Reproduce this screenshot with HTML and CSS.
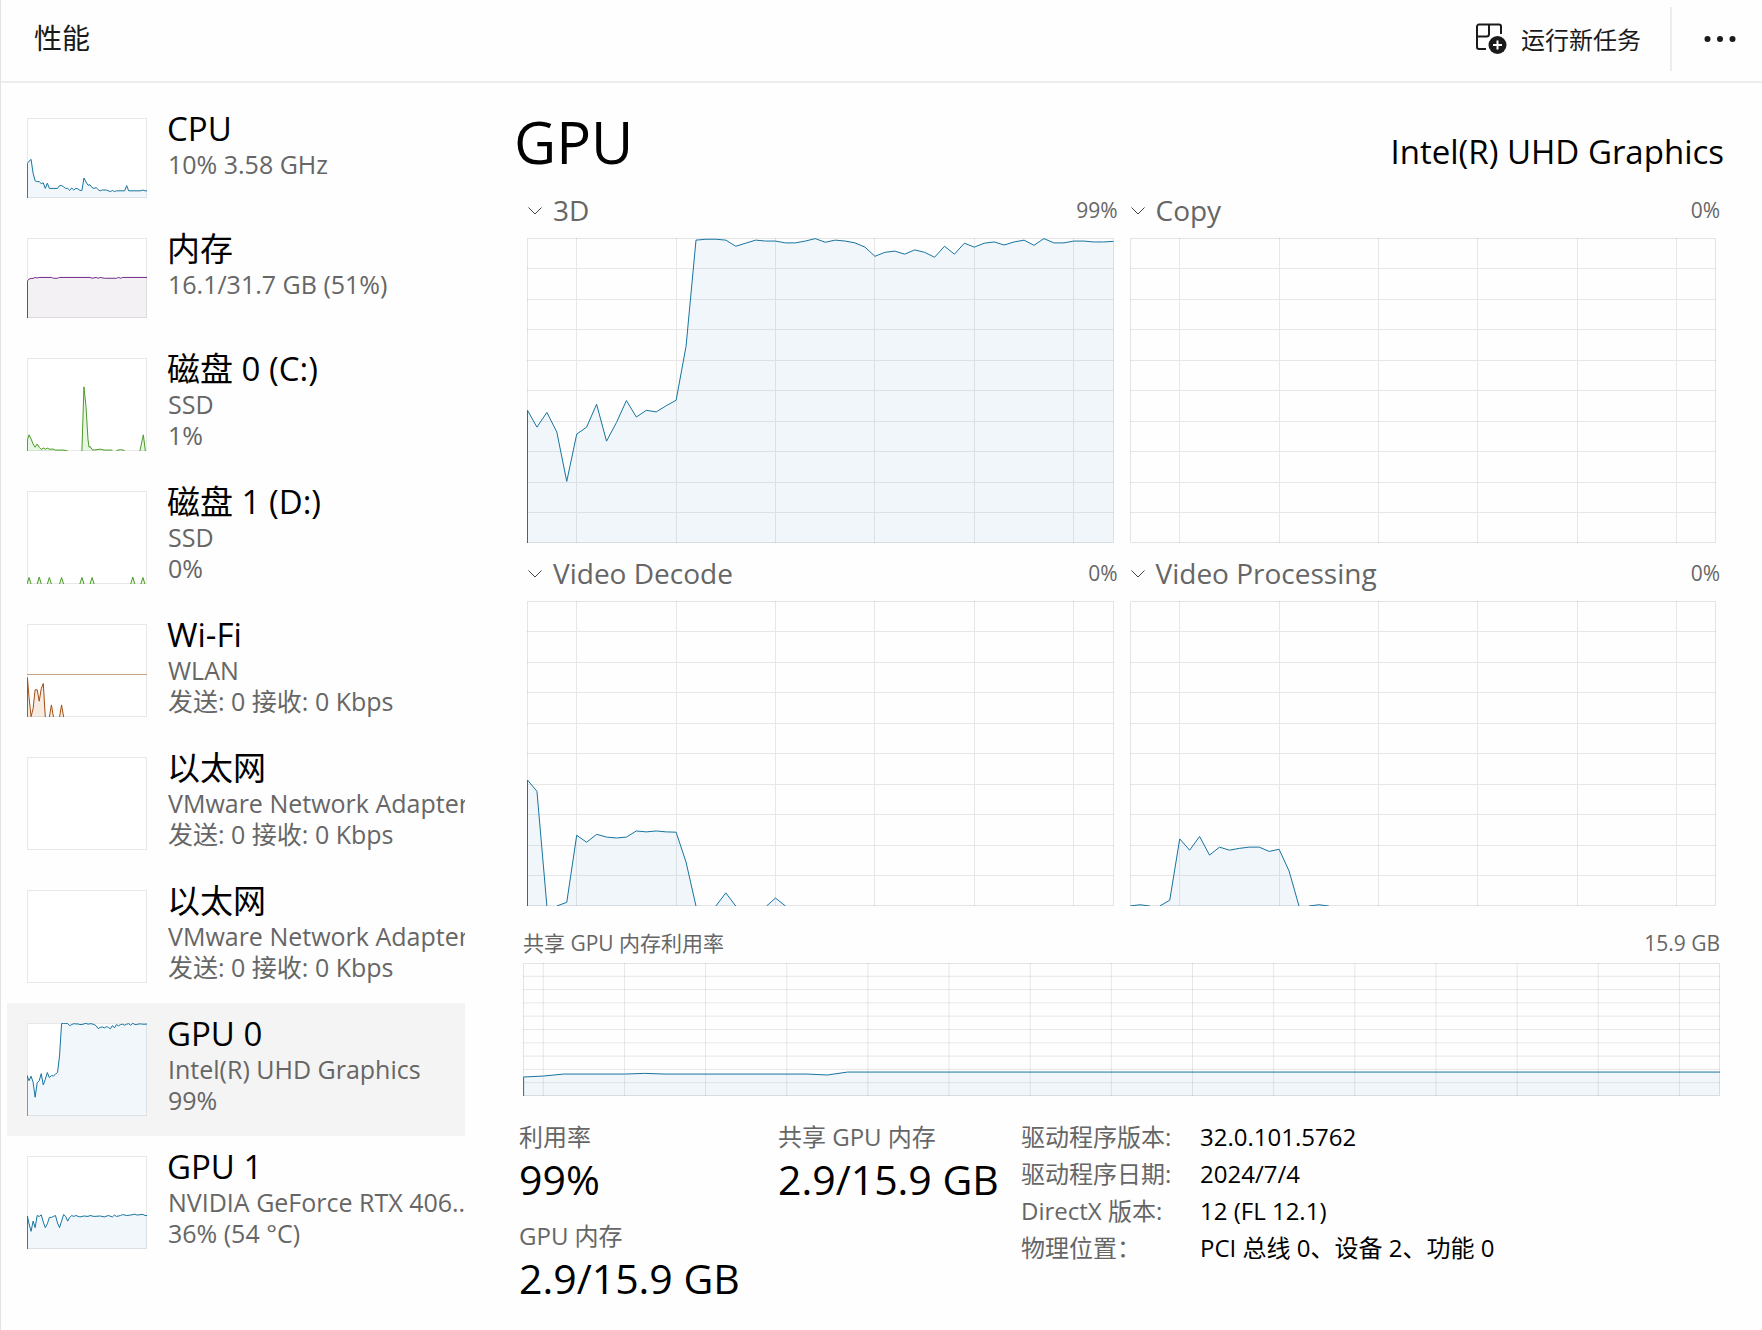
FILE: index.html
```html
<!DOCTYPE html>
<html lang="zh-CN">
<head>
<meta charset="utf-8">
<meta name="viewport" content="width=device-width, initial-scale=1">
<title>性能</title>
<link rel="stylesheet" href="styles.css">
</head>
<body>
<svg class="defs" aria-hidden="true">
  <defs>
    <!-- One unit across is one sample; 100 units down is the full scale -->
    <symbol id="grid-engine" viewBox="0 0 59 100" preserveAspectRatio="none">
      <path class="grid-line" d="M5 0V100M15 0V100M25 0V100M35 0V100M45 0V100M55 0V100M0 10H59M0 20H59M0 30H59M0 40H59M0 50H59M0 60H59M0 70H59M0 80H59M0 90H59"/>
    </symbol>
    <symbol id="grid-memory" viewBox="0 0 59 100" preserveAspectRatio="none">
      <path class="grid-line" d="M1 0V100M5 0V100M9 0V100M13 0V100M17 0V100M21 0V100M25 0V100M29 0V100M33 0V100M37 0V100M41 0V100M45 0V100M49 0V100M53 0V100M57 0V100M0 10H59M0 20H59M0 30H59M0 40H59M0 50H59M0 60H59M0 70H59M0 80H59M0 90H59"/>
    </symbol>
    <symbol id="series-3d" viewBox="0 0 59 100" preserveAspectRatio="none">
      <path class="series" d="M.05 100V56.5L1 62 2 57.2 3 63.6 4 79.8 5 64.3 6 62 7 54.5 8 66.6 9 60.5 10 53.3 11 58.7 12 56.5 13 57 14 55 15 53.2 16 35.5 17 .7 18 .4H19L20 .7 21 2.7 22 1.7 23 .7 24 1H25L26 1.6H27L28 1 29 .2 30 1.4 31 .7 32 1 33 1.6 34 3 35 6 36 4.7 37 4.3 38 5.3 39 3.9 40 4.7 41 6.3 42 2.7 43 5.3 44 1.7 45 3 46 1.7 47 1.3 48 2.3 49 1.3 50 .7 51 2.4 52 .2 53 1.6H54L55 1H56L57 1.3H58L59 1.1H61V100"/>
    </symbol>
  </defs>
</svg>

<div class="app">
  <header class="topbar">
    <h1 class="page-title">性能</h1>
    <div class="commands">
      <button class="run-task" type="button">
        <svg class="run-icon" viewBox="0 0 32 32" aria-hidden="true">
          <g fill="none" stroke="#1a1a1a" stroke-width="2">
            <path d="M11 26H4A2 2 0 0 1 2 24V3.500A2 2 0 0 1 4 1.500H24A2 2 0 0 1 26 3.500V11"/>
            <path d="M14 1.500V11A2.500 2.500 0 0 1 11.500 13.500H2"/>
          </g>
          <circle cx="22.500" cy="22" r="9" fill="#1a1a1a"/>
          <path d="M22.500 17.500V26.500M18 22H27" stroke="#fff" stroke-width="2"/>
        </svg>
        <span>运行新任务</span>
      </button>
      <button class="more" type="button" aria-label="更多">
        <svg class="more-icon" viewBox="0 0 32 8" aria-hidden="true">
          <circle cx="3.500" cy="4" r="3"/><circle cx="16" cy="4" r="3"/><circle cx="28.500" cy="4" r="3"/>
        </svg>
      </button>
    </div>
  </header>

  <div class="body">
    <nav class="sidebar" aria-label="设备">
      <button class="device" type="button">
        <svg class="thumb thumb-short blue" viewBox="0 0 59 100" preserveAspectRatio="none" aria-hidden="true"><path class="series" d="M.2 100V56.700L1 54 2 51.700 3 69 4 78.500 5 79.500 6 79.500 7 82 8 81 9 88 10 81.500 11 88H15L16 84.500H17L18 86 19 88H20L21 90.500 22 87.500 23 90 24 88 25 88.500 26 90.500H27L28 75 29 80 30 84 31 83.500 32 87 33 88 34 87 35 89.500 36 91 37 90H39L41 92 42 90.500 43 92 44 91H48L49 84.500 50 91H56L57 90 58 91H61V100"/></svg>
        <span class="device-text"><span class="device-name">CPU</span><span class="device-sub">10% 3.58 GHz</span></span>
      </button>
      <button class="device" type="button">
        <svg class="thumb thumb-short purple" viewBox="0 0 59 100" preserveAspectRatio="none" aria-hidden="true"><path class="series" d="M.2 100V53.500L1 51.500 2 50.500H3L4 49.300 5 50 6 49.300H12L13 50.300H15L16 49.300H31L32 50.300 34 49.300 35 50.300 36 49.300 38 50.300H44L45 49.300 46 50.300 47 49.300H61V100"/></svg>
        <span class="device-text"><span class="device-name">内存</span><span class="device-sub">16.1/31.7 GB (51%)</span></span>
      </button>
      <button class="device" type="button">
        <svg class="thumb green" viewBox="0 0 59 100" preserveAspectRatio="none" aria-hidden="true"><path class="series" d="M.2 100V88L1 82.600 2 87 3 92.500 4 96 5 92.500 6 96 7 98.300 8 96.700 9 98 10 97 11 98H13L14 99H18L20 100M27 100L28 31 29 52 30 88 30.500 96 31 95 32 98.500 33 99 36 98 38 99H42M44 99.500L46 98.500 48 99.500M55.500 100L57.200 82.600 58.200 100"/></svg>
        <span class="device-text"><span class="device-name">磁盘 0 (C:)</span><span class="device-sub">SSD</span><span class="device-sub">1%</span></span>
      </button>
      <button class="device" type="button">
        <svg class="thumb green" viewBox="0 0 59 100" preserveAspectRatio="none" aria-hidden="true"><path class="series" d="M0 100L1 93 2 100M5 100L6 92.500 7 100M10 100L11 93 12 100M16 100L17 93 18 100M26 100L27 93 28 100M31 100L32 93 33 100M51 100L52 92.500 53 100M56 100L57 93 58 100"/></svg>
        <span class="device-text"><span class="device-name">磁盘 1 (D:)</span><span class="device-sub">SSD</span><span class="device-sub">0%</span></span>
      </button>
      <button class="device" type="button">
        <svg class="thumb orange" viewBox="0 0 59 100" preserveAspectRatio="none" aria-hidden="true"><path class="peak" d="M0 54.300H59"/><path class="series" d="M.2 100V57.600L1 79 2 99.600 3 91 4 70.700H5L6 83 7 69.600 8 64 9 100M11 100L12 87 13 100M16 100L17 87 18 100"/></svg>
        <span class="device-text"><span class="device-name">Wi-Fi</span><span class="device-sub">WLAN</span><span class="device-sub">发送: 0 接收: 0 Kbps</span></span>
      </button>
      <button class="device" type="button">
        <svg class="thumb" aria-hidden="true"></svg>
        <span class="device-text"><span class="device-name">以太网</span><span class="device-sub">VMware Network Adapter</span><span class="device-sub">发送: 0 接收: 0 Kbps</span></span>
      </button>
      <button class="device" type="button">
        <svg class="thumb" aria-hidden="true"></svg>
        <span class="device-text"><span class="device-name">以太网</span><span class="device-sub">VMware Network Adapter</span><span class="device-sub">发送: 0 接收: 0 Kbps</span></span>
      </button>
      <button class="device selected" type="button" aria-current="page">
        <svg class="thumb blue" aria-hidden="true"><use href="#series-3d" width="100%" height="100%"/></svg>
        <span class="device-text"><span class="device-name">GPU 0</span><span class="device-sub">Intel(R) UHD Graphics</span><span class="device-sub">99%</span></span>
      </button>
      <button class="device" type="button">
        <svg class="thumb blue" viewBox="0 0 59 100" preserveAspectRatio="none" aria-hidden="true"><path class="series" d="M.2 100V64.500L1 73 2 81 3 70 4 77 5 64 6 65 7 63.300 8 71 9 77 10 73 11 66 12 66 13 65 14 64 15 72 16 77 17 70 18 63 19 65 20 70 21 66 22 64 23 65 24 64 26 65.500 28 64.500 30 65 31 64 33 65 36 64.500 38 65.500 40 64 42 65.500 43 63.500 44 65 46 64 47 63 49 64 51 63.500 53 62.500 54 63.500 57 62.800 58 64H61V100"/></svg>
        <span class="device-text"><span class="device-name">GPU 1</span><span class="device-sub">NVIDIA GeForce RTX 406...</span><span class="device-sub">36% (54 °C)</span></span>
      </button>
    </nav>

    <main class="detail">
      <div class="detail-head">
        <h2 class="detail-title">GPU</h2>
        <span class="detail-model">Intel(R) UHD Graphics</span>
      </div>

      <div class="engines">
        <section class="engine">
          <div class="engine-head">
            <button class="engine-pick" type="button"><svg class="chevron" viewBox="0 0 14 10" aria-hidden="true"><path d="M.5 1.500L7 8 13.500 1.500"/></svg>3D</button>
            <span class="scale">99%</span>
          </div>
          <svg class="chart blue" role="img" aria-label="3D"><use href="#grid-engine" width="100%" height="100%"/><use href="#series-3d" width="100%" height="100%"/></svg>
        </section>
        <section class="engine">
          <div class="engine-head">
            <button class="engine-pick" type="button"><svg class="chevron" viewBox="0 0 14 10" aria-hidden="true"><path d="M.5 1.500L7 8 13.500 1.500"/></svg>Copy</button>
            <span class="scale">0%</span>
          </div>
          <svg class="chart blue" role="img" aria-label="Copy"><use href="#grid-engine" width="100%" height="100%"/></svg>
        </section>
        <section class="engine">
          <div class="engine-head">
            <button class="engine-pick" type="button"><svg class="chevron" viewBox="0 0 14 10" aria-hidden="true"><path d="M.5 1.500L7 8 13.500 1.500"/></svg>Video Decode</button>
            <span class="scale">0%</span>
          </div>
          <svg class="chart blue" viewBox="0 0 59 100" preserveAspectRatio="none" role="img" aria-label="Video Decode"><use href="#grid-engine" width="59" height="100"/><path class="series" d="M.05 100V58.700L1 62.400 2 100M3 100L4 98.800 5 76.800 6 79.100 7 76.500 8 77.400 9 77.700 10 77.400 11 75.400 12 75.700 13 75.400 14 75.700 15 75.800 16 85.600 17 100M19 100L20 95.700 21 100M24.100 100L25 97.400 26 100"/></svg>
        </section>
        <section class="engine">
          <div class="engine-head">
            <button class="engine-pick" type="button"><svg class="chevron" viewBox="0 0 14 10" aria-hidden="true"><path d="M.5 1.500L7 8 13.500 1.500"/></svg>Video Processing</button>
            <span class="scale">0%</span>
          </div>
          <svg class="chart blue" viewBox="0 0 59 100" preserveAspectRatio="none" role="img" aria-label="Video Processing"><use href="#grid-engine" width="59" height="100"/><path class="series" d="M0 100L1 99.600 2 100M3 100L4 98.100 5 78 6 81.700 7 77.200 8 83.300 9 80.700 10 81.700 11 81.100 12 80.700H13L14 82.100 15 81.400 16 88.500 17 100M18 100L19 99.600 20 100"/></svg>
        </section>
      </div>

      <section class="memory">
        <div class="memory-head">
          <span>共享 GPU 内存利用率</span>
          <span>15.9 GB</span>
        </div>
        <svg class="chart chart-memory blue" viewBox="0 0 59 100" preserveAspectRatio="none" role="img" aria-label="共享 GPU 内存利用率"><use href="#grid-memory" width="59" height="100"/><path class="series" d="M.03 100V85.700L1 85 2 83.500H5L6 83 7 83.500H14L15 84.200 16 82H61V100"/></svg>
      </section>

      <div class="facts">
        <dl class="stats">
          <div class="stat"><dt>利用率</dt><dd>99%</dd></div>
          <div class="stat"><dt>共享 GPU 内存</dt><dd>2.9/15.9 GB</dd></div>
          <div class="stat"><dt>GPU 内存</dt><dd>2.9/15.9 GB</dd></div>
        </dl>
        <dl class="specs">
          <dt>驱动程序版本:</dt><dd>32.0.101.5762</dd>
          <dt>驱动程序日期:</dt><dd>2024/7/4</dd>
          <dt>DirectX 版本:</dt><dd>12 (FL 12.1)</dd>
          <dt>物理位置：</dt><dd>PCI 总线 0、设备 2、功能 0</dd>
        </dl>
      </div>
    </main>
  </div>
</div>
</body>
</html>
```
FILE: styles.css
```css
* { box-sizing: border-box; }

body {
  margin: 0;
  background: #fefefe;
  color: #000;
  font-family: "Open Sans", "Noto Sans CJK SC", sans-serif;
  font-size: 24px;
}

h1, h2, dl, dd { margin: 0; font-weight: 400; }

button {
  padding: 0;
  border: 0;
  background: none;
  color: inherit;
  font: inherit;
  text-align: left;
}

svg { display: block; }
.defs { position: absolute; width: 0; height: 0; }

.app {
  min-height: 100vh;
  border-left: 1px solid #e3e3e3;
}

/* Top bar */
.topbar {
  display: flex;
  align-items: center;
  justify-content: space-between;
  height: 83px;
  padding-left: 33px;
  border-bottom: 2px solid #ededed;
}
.page-title { font-size: 28px; line-height: 40px; color: #1a1a1a; padding-bottom: 6px; }
.commands { display: flex; align-items: center; height: 64px; margin-bottom: 4px; }
.run-task {
  display: flex;
  align-items: center;
  gap: 14px;
  height: 64px;
  padding-right: 29px;
  border-right: 2px solid #ededed;
  color: #1a1a1a;
}
.run-icon { width: 32px; height: 32px; }
.more { display: flex; align-items: center; justify-content: center; height: 64px; width: 90px; padding-left: 6px; }
.more-icon { width: 32px; height: 8px; fill: #1a1a1a; }

.body { display: flex; }

/* Device list */
.sidebar {
  flex: none;
  width: 464px;
  padding: 15px 0 0 6px;
}
.device {
  display: flex;
  align-items: flex-start;
  width: 100%;
  overflow: hidden;
}
.device.selected { background: #f4f4f4; }
.thumb {
  flex: none;
  width: 120px;
  height: 93px;
  margin: 20px;
  background: #fff;
  box-shadow: inset 0 0 0 1px #e8e8e8;
}
.thumb-short { height: 80px; }
.device-text {
  flex: 1;
  min-width: 0;
  padding-top: 11px;
  overflow: hidden;
  white-space: nowrap;
}
.device-name { display: block; font-size: 33px; line-height: 40px; }
.device-sub { display: block; padding-left: 1px; font-size: 25px; line-height: 31px; color: #666; }

/* Charts */
.grid-line {
  fill: none;
  stroke: #000;
  stroke-opacity: .09;
  stroke-width: 1px;
  vector-effect: non-scaling-stroke;
  shape-rendering: crispEdges;
}
.series, .peak { stroke-width: 1px; vector-effect: non-scaling-stroke; }
.blue { stroke: #17749f; fill: rgba(20, 115, 195, .06); }
.purple { stroke: #702a88; fill: rgba(80, 50, 85, .07); }
.green { stroke: #4c9a28; fill: rgba(80, 190, 40, .13); }
.orange { stroke: #a04e14; fill: rgba(190, 100, 20, .12); }
.peak { stroke: #c9a283; }

/* Selected device */
.detail {
  flex: 1;
  min-width: 0;
  padding: 21px 42px 0 58px;
}
.detail-head {
  display: flex;
  align-items: baseline;
  justify-content: space-between;
  margin: 0 -4px 10px -9px;
}
.detail-title { font-size: 58px; line-height: 76px; }
.detail-model { font-size: 33px; line-height: 40px; }

.engines {
  display: grid;
  grid-template-columns: 1fr 1fr;
  gap: 10px 8px;
}
.engine-head {
  display: flex;
  align-items: center;
  justify-content: space-between;
  padding-left: 5px;
  margin-bottom: 8px;
  color: #666;
}
.engine-pick { display: flex; align-items: center; gap: 11px; font-size: 28px; line-height: 40px; }
.chevron { width: 14px; height: 10px; margin-top: 2px; fill: none; stroke: #444; stroke-width: 1px; }
.scale { font-size: 21px; line-height: 40px; }
.chart {
  width: 100%;
  height: 305px;
  box-shadow: inset 0 0 0 1px #e4e4e4;
}
.engine .chart { width: calc(100% - 8px); margin: 0 4px; }

.memory { margin-top: 21px; }
.memory-head {
  display: flex;
  justify-content: space-between;
  margin-bottom: 4px;
  font-size: 21px;
  line-height: 32px;
  color: #666;
}
.chart-memory { height: 133px; }

/* Figures under the charts */
.facts {
  display: flex;
  align-items: flex-start;
  margin: 23px 0 0 -4px;
  padding-bottom: 20px;
}
.stats {
  display: grid;
  grid-template-columns: 259px 243px;
  row-gap: 15px;
  white-space: nowrap;
}
.stat dt { line-height: 36px; color: #666; }
.stat dd { font-size: 41px; line-height: 48px; }
.specs {
  display: grid;
  grid-template-columns: 179px auto;
  row-gap: 1px;
  line-height: 36px;
  white-space: nowrap;
}
.specs dt { color: #666; }
```
